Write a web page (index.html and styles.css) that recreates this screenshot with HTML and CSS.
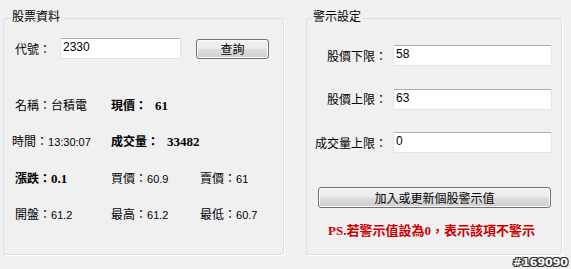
FILE: index.html
```html
<!DOCTYPE html>
<html lang="zh-Hant">
<head>
<meta charset="utf-8">
<title>股票警示</title>
<link rel="stylesheet" href="styles.css">
</head>
<body>
<div class="panels">
  <fieldset class="box box-stock">
    <legend class="box-title">股票資料</legend>
    <div class="query">
      <label class="q-label">代號：</label>
      <input class="field field-code" value="2330">
      <button class="btn btn-query">查詢</button>
    </div>
    <div class="quote">
      <div class="cell">名稱：台積電</div>
      <div class="cell strong">現價：<span class="num-b">61</span></div>
      <div class="cell"></div>

      <div class="cell shift">時間：<span class="num">13:30:07</span></div>
      <div class="cell strong">成交量：<span class="num-b">33482</span></div>
      <div class="cell"></div>

      <div class="cell strong">漲跌：<span class="num-b tight">0.1</span></div>
      <div class="cell">買價：<span class="num">60.9</span></div>
      <div class="cell">賣價：<span class="num">61</span></div>

      <div class="cell">開盤：<span class="num">61.2</span></div>
      <div class="cell">最高：<span class="num">61.2</span></div>
      <div class="cell">最低：<span class="num">60.7</span></div>
    </div>
  </fieldset>

  <fieldset class="box box-alert">
    <legend class="box-title">警示設定</legend>
    <div class="limits">
      <label class="l-label">股價下限：</label>
      <input class="field field-limit" value="58">
      <label class="l-label">股價上限：</label>
      <input class="field field-limit" value="63">
      <label class="l-label">成交量上限：</label>
      <input class="field field-limit" value="0">
    </div>
    <button class="btn btn-update">加入或更新個股警示值</button>
    <p class="note">PS.若警示值設為0，表示該項不警示</p>
  </fieldset>
</div>
<div class="mark">#169090</div>
</body>
</html>
```

FILE: styles.css
```css
html, body {
  margin: 0;
  padding: 0;
}
body {
  width: 571px;
  height: 269px;
  overflow: hidden;
  background: #f0f0f0;
  color: #000;
  font-family: "Noto Sans CJK TC", sans-serif;
  font-size: 12px;
}
.panels {
  display: flex;
  gap: 22px;
  padding: 7px 0 0 3px;
}
.box {
  box-sizing: border-box;
  margin: 0;
  padding: 0;
  height: 248px;
  border: 1px solid #d5dfe5;
  border-radius: 3px;
  box-shadow: 1px 1px 0 #fff;
}
.box-stock {
  width: 281px;
  padding-left: 11px;
}
.box-alert {
  width: 256px;
  padding-left: 8px;
}
.box-title {
  padding: 0 2px 5px;
  line-height: 18px;
  font-size: 12px;
}
.box-stock .box-title {
  margin-left: -5px;
}
.box-alert .box-title {
  margin-left: -4px;
}

/* query row */
.query {
  display: flex;
  align-items: center;
  height: 21px;
  margin-top: 8px;
}
.q-label {
  width: 45px;
  line-height: 18px;
}
.field {
  box-sizing: border-box;
  height: 21px;
  margin: 0;
  padding: 0 2px 3px;
  border: 1px solid #e2e3ea;
  border-top-color: #abadb3;
  border-radius: 2px;
  background: #fff;
  font-family: "Liberation Sans", sans-serif;
  font-size: 12px;
  color: #000;
  outline: none;
}
.field-code {
  width: 121px;
}
.btn {
  box-sizing: border-box;
  height: 21px;
  margin: 0;
  padding: 0;
  border: 1px solid #707070;
  border-radius: 3px;
  background: linear-gradient(#f2f2f2 0%, #ebebeb 48%, #dddddd 52%, #cfcfcf 100%);
  box-shadow: inset 0 0 0 1px #fbfbfb;
  font-family: "Noto Sans CJK TC", sans-serif;
  font-size: 12px;
  line-height: 17px;
  color: #000;
}
.btn-query {
  width: 73px;
  height: 20px;
  margin-left: 15px;
}

/* quote grid */
.quote {
  display: grid;
  grid-template-columns: 96px 89px 1fr;
  grid-auto-rows: 20px;
  row-gap: 16.5px;
  margin-top: 36px;
  align-items: center;
}
.cell {
  line-height: 20px;
  white-space: nowrap;
}
.cell.shift {
  margin-left: -3px;
}
.strong {
  font-weight: bold;
}
.num {
  font-family: "Liberation Sans", sans-serif;
  font-size: 11px;
}
.num-b {
  font-family: "Liberation Serif", serif;
  font-weight: bold;
  font-size: 13px;
  margin-left: 8px;
}
.num-b.tight {
  margin-left: 0;
}

/* alert limits */
.limits {
  display: grid;
  grid-template-columns: 72px 159px;
  column-gap: 6px;
  grid-auto-rows: 21px;
  row-gap: 22.5px;
  align-items: center;
  margin-top: 15px;
}
.l-label {
  text-align: right;
  white-space: nowrap;
  line-height: 18px;
}
.field-limit {
  width: 159px;
}
.btn-update {
  display: block;
  width: 233px;
  margin: 34px 0 0 3px;
}
.note {
  margin: 14px 0 0;
  width: 233px;
  text-align: center;
  color: #cc0000;
  font-family: "Liberation Serif", "Noto Sans CJK TC", serif;
  font-weight: bold;
  font-size: 13px;
  line-height: 18px;
}

/* watermark */
.mark {
  margin-top: 2px;
  padding-right: 3px;
  text-align: right;
  font-family: "DejaVu Sans", sans-serif;
  font-weight: bold;
  font-size: 11px;
  line-height: 12px;
  color: #fff;
  text-shadow: 1px 0 0 #333, -1px 0 0 #333, 0 1px 0 #333, 0 -1px 0 #333,
    1px 1px 0 #333, -1px -1px 0 #333, 1px -1px 0 #333, -1px 1px 0 #333;
}
```
